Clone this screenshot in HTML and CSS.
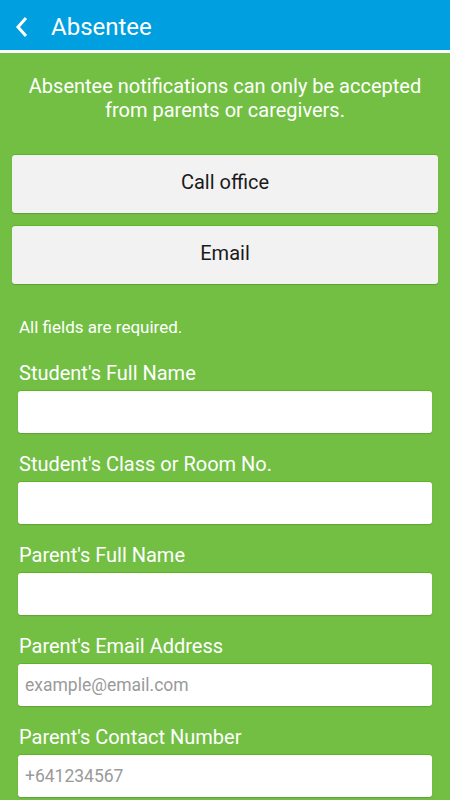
FILE: index.html
```html
<!DOCTYPE html>
<html lang="en">
<head>
    <meta charset="UTF-8">
    <meta name="viewport" content="width=device-width, initial-scale=1.0">
    <title>Absentee</title>
    <link rel="stylesheet" href="styles.css">
</head>
<body>
    <header class="topbar">
        <svg class="back" width="14" height="22" viewBox="0 0 14 22">
            <polyline points="11,2 3,11 11,20" fill="none" stroke="#fff" stroke-width="3"/>
        </svg>
        <span class="title">Absentee</span>
    </header>

    <main class="content">
        <p class="intro">Absentee notifications can only be accepted from parents or caregivers.</p>

        <button class="action" type="button">Call office</button>
        <button class="action" type="button">Email</button>

        <form class="form">
            <p class="note">All fields are required.</p>

            <label for="student">Student's Full Name</label>
            <input type="text" id="student">

            <label for="room">Student's Class or Room No.</label>
            <input type="text" id="room">

            <label for="parent">Parent's Full Name</label>
            <input type="text" id="parent">

            <label for="email">Parent's Email Address</label>
            <input type="email" id="email" placeholder="example@email.com">

            <label for="phone">Parent's Contact Number</label>
            <input type="tel" id="phone" placeholder="+641234567">
        </form>
    </main>
</body>
</html>
```

FILE: styles.css
```css
body {
    margin: 0;
    font-family: Roboto, 'Noto Sans', sans-serif;
    background-color: #72bf44;
    color: #fff;
}
.topbar {
    display: flex;
    align-items: center;
    height: 46px;
    padding-top: 4px;
    background-color: #009fe0;
    border-bottom: 3px solid #fff;
}
.back {
    margin-left: 15px;
}
.title {
    margin-left: 22px;
    font-size: 24px;
}
.content {
    padding: 21px 12px 0;
}
.intro {
    margin: 0 0 33px;
    text-align: center;
    font-size: 20px;
    line-height: 24px;
}
.action {
    display: block;
    width: 100%;
    height: 58px;
    margin-bottom: 13px;
    padding: 0 0 4px;
    border: none;
    border-radius: 3px;
    background-color: #f2f2f2;
    color: #1a1a1a;
    font-family: inherit;
    font-size: 20px;
    box-shadow: 0 -1px 0 #5db523, 0 1px 1px rgba(0, 0, 0, 0.18);
}
.form {
    display: flex;
    flex-direction: column;
    padding: 0 6px;
}
.note {
    margin: 20px 1px 24px;
    font-size: 17px;
    line-height: 20px;
}
label {
    padding-left: 1px;
    font-size: 20px;
    line-height: 24px;
    margin-bottom: 6px;
}
input {
    height: 42px;
    margin-bottom: 19px;
    padding: 0 7px;
    border: none;
    border-radius: 3px;
    box-sizing: border-box;
    background-color: #fff;
    font-family: inherit;
    font-size: 17.5px;
    color: #333;
    box-shadow: 0 -1px 0 #5db523, 0 1px 1px rgba(0, 0, 0, 0.15);
}
input::placeholder {
    color: #9a9a9a;
}
```
